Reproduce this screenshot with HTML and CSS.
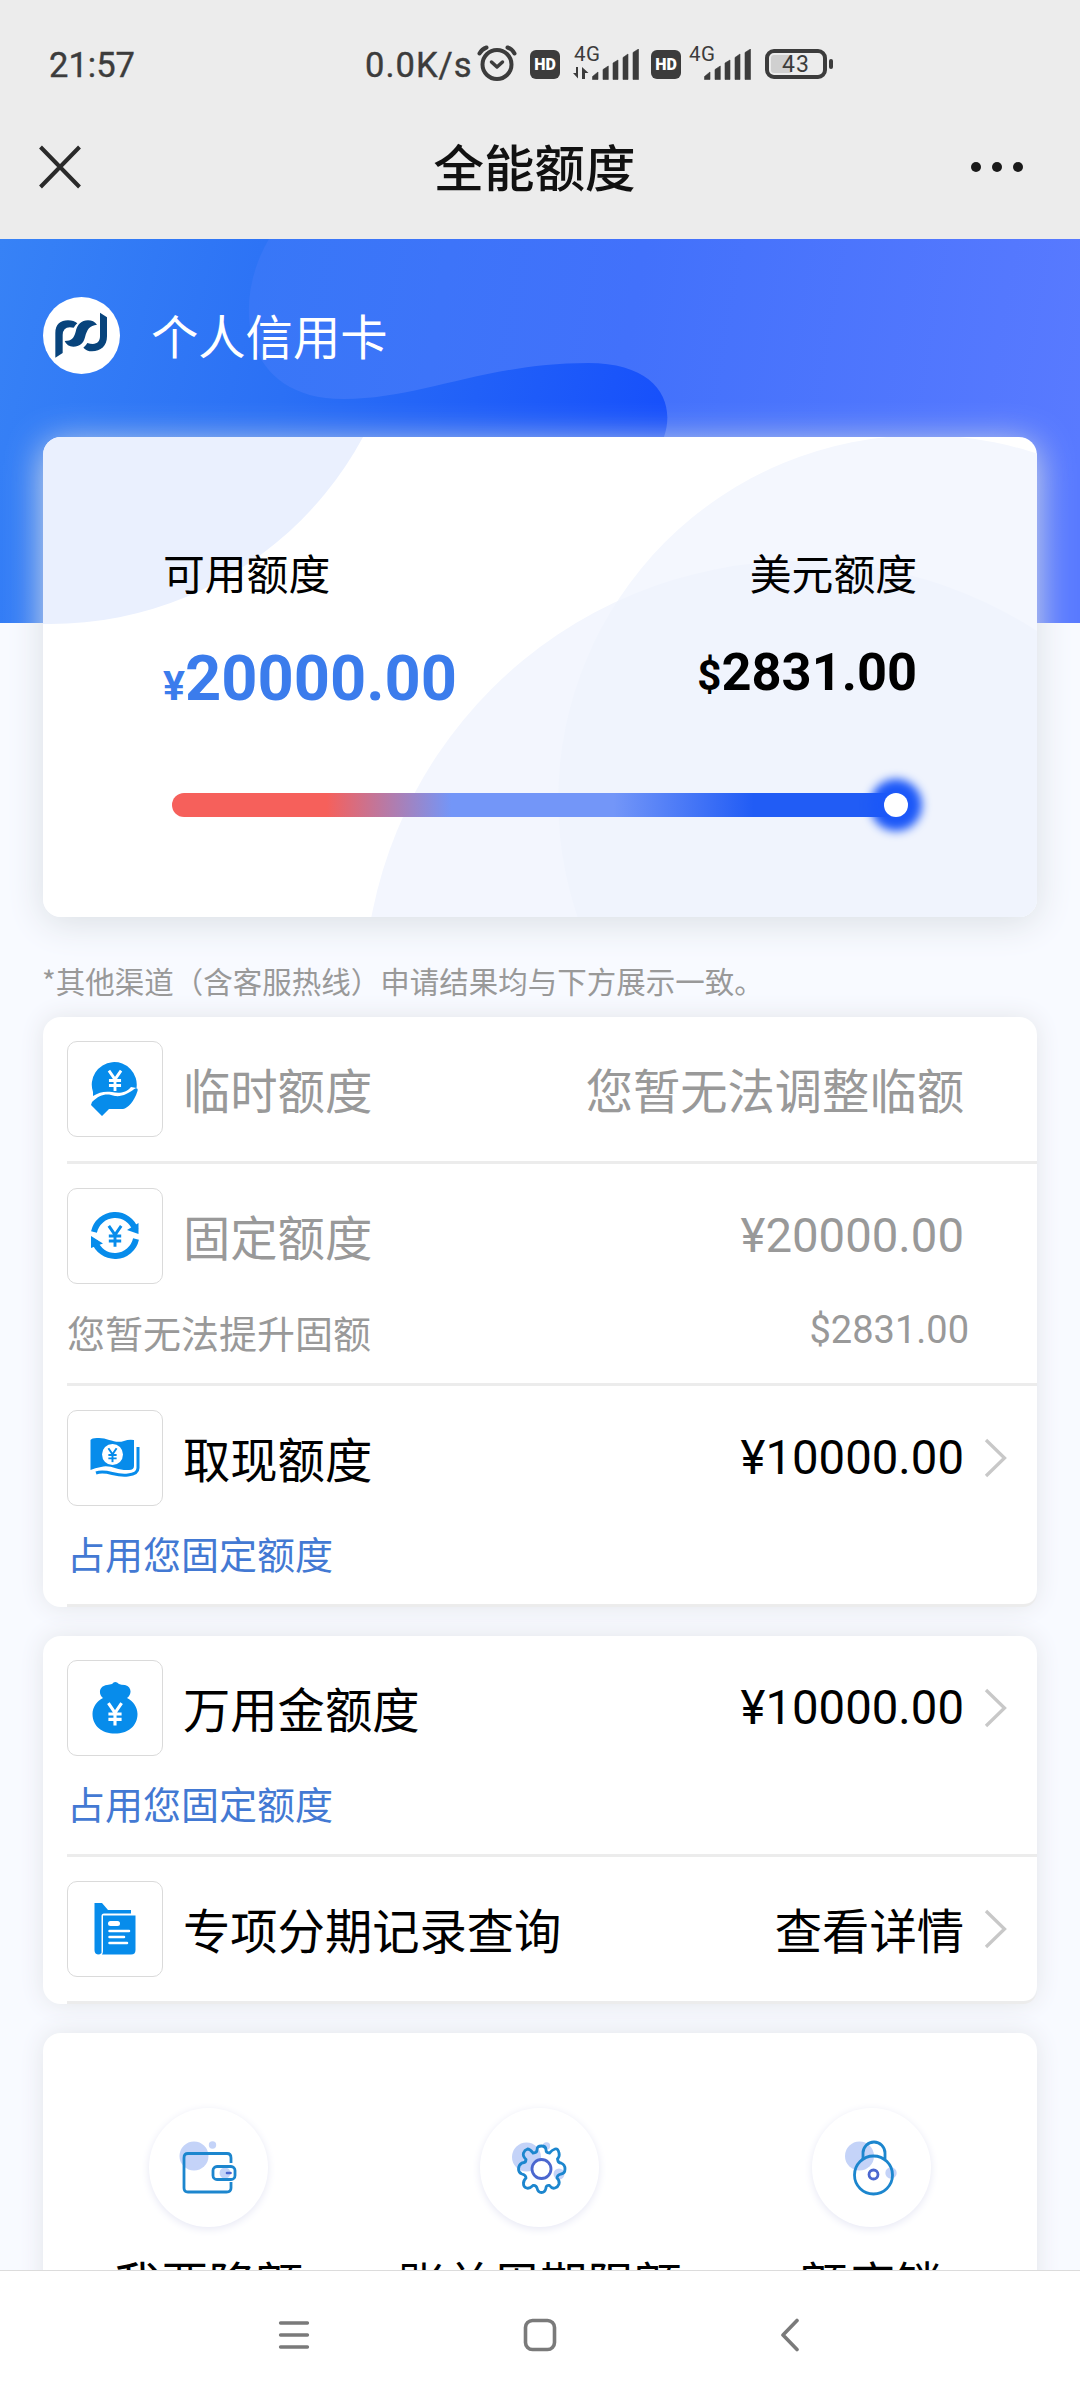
FILE: index.html
```html
<!DOCTYPE html>
<html lang="zh-CN">
<head>
<meta charset="utf-8">
<title>全能额度</title>
<link rel="stylesheet" href="styles.css">
</head>
<body>
<svg class="defs" width="0" height="0">
  <defs>
    <symbol id="chevron" viewBox="0 0 24 40"><path d="M2 2L20.500 20L2 38" fill="none" stroke="#c8c8c8" stroke-width="3.300"/></symbol>
    <symbol id="bars" viewBox="0 0 47 31"><path d="M.5 30.500V27.500L6 23V30.500ZM11 30.500V20.500L16.300 17V30.500ZM21 30.500V14L26 11V30.500ZM31 30.500V8.500L36 5V30.500ZM41 30.500V3.500L46.500 0V30.500Z" fill="#3c3c3c" stroke="#3c3c3c" stroke-width=".6"/></symbol>
    <symbol id="yen" viewBox="0 0 16 20"><path d="M2.500 1L8 9L13.500 1M8 9V19.500M2.500 10H13.500M2.500 14.500H13.500" fill="none" stroke="currentColor" stroke-width="2.600"/></symbol>
  </defs>
</svg>
<div class="screen">
  <header class="top">
    <div class="status">
      <span class="time">21:57</span>
      <span class="speed">0.0K/s</span>
      <svg class="alarm" width="40" height="36" viewBox="0 0 40 36"><g fill="none" stroke="#3c3c3c" stroke-linecap="round"><circle cx="20" cy="19.500" r="14.500" stroke-width="4"/><path d="M14.500 17L20 22L25.500 17" stroke-width="3.500" stroke-linejoin="round"/><path d="M2.500 8.500Q5 4 9.500 2.500M37.500 8.500Q35 4 30.500 2.500" stroke-width="4"/></g></svg>
      <span class="hd hd-first">HD</span>
      <span class="signal signal-first"><span class="gen">4G</span><svg class="arrows" width="16" height="12" viewBox="0 0 16 12"><path d="M5 0V11.500L0 6H3V0ZM9 12V0L15.500 6H12V12Z" fill="#3c3c3c"/></svg><svg class="bars" width="47" height="31"><use href="#bars"/></svg></span>
      <span class="hd hd-second">HD</span>
      <span class="signal signal-second"><span class="gen">4G</span><svg class="bars" width="47" height="31"><use href="#bars"/></svg></span>
      <span class="battery">43</span><span class="nub"></span>
    </div>
    <div class="titlebar">
      <svg class="close" width="42" height="44" viewBox="0 0 42 44"><path d="M1.500 2L40.500 42M40.500 2L1.500 42" stroke="#2a2a2a" stroke-width="4"/></svg>
      <h1 class="title">全能额度</h1>
      <svg class="more" width="54" height="12" viewBox="0 0 54 12"><g fill="#1a1a1a"><circle cx="6" cy="6" r="5"/><circle cx="27" cy="6" r="5"/><circle cx="48" cy="6" r="5"/></g></svg>
    </div>
  </header>

  <main class="content">
    <section class="hero">
      <svg class="hero-bg" width="1080" height="384" viewBox="0 0 1080 384">
        <defs>
          <linearGradient id="deep" gradientUnits="userSpaceOnUse" x1="0" y1="0" x2="670" y2="160"><stop offset="0" stop-color="#3782f6"/><stop offset=".45" stop-color="#2b70f5"/><stop offset="1" stop-color="#1750fb"/></linearGradient>
          <linearGradient id="light" gradientUnits="userSpaceOnUse" x1="245" y1="80" x2="1080" y2="220"><stop offset="0" stop-color="#3877f7"/><stop offset=".45" stop-color="#4271fb"/><stop offset="1" stop-color="#597aff"/></linearGradient>
        </defs>
        <rect width="1080" height="384" fill="url(#deep)"/>
        <path d="M269 0C232 62 240 160 344 160C421 160 485 124 588 124C657 124 676 163 664 198V384H1080V0Z" fill="url(#light)"/>
      </svg>
      <div class="account">
        <svg class="logo" width="77" height="77" viewBox="21 20 231 231"><circle cx="136.500" cy="135.500" r="115.500" fill="#fff"/><path d="M58 202V128C58 102 74 90 96 90Q114 90 124 99Q117 105 113 112Q81 105 80 134V188Z" fill="#08447c"/><path d="M213 81V138C213 167 194 183 168 183Q152 183 142 172Q150 166 154 158C180 166 192 156 192 138V67Z" fill="#08447c"/><path d="M183 103Q173 90 156 90C136 90 124 102 119 124C114 143 107 151 86 152Q93 169 112 169C131 169 142 160 147 141C153 117 161 105 183 103Z" fill="#08447c"/></svg>
        <span class="account-name">个人信用卡</span>
      </div>
      <div class="quota">
        <svg class="quota-bg" width="994" height="480" viewBox="43 437 994 480">
          <rect x="43" y="437" width="994" height="480" fill="#fff"/>
          <circle cx="50" cy="268.500" r="355.500" fill="#eaf0fe"/>
          <circle cx="800" cy="997" r="436" fill="#f3f6fe"/>
          <circle cx="923" cy="800" r="364.700" fill="#f4f7fe"/>
          <clipPath id="overlap"><circle cx="923" cy="800" r="364.700"/></clipPath>
          <circle cx="800" cy="997" r="436" fill="#f0f4fd" clip-path="url(#overlap)"/>
        </svg>
        <div class="figures">
          <div class="figure"><span class="label">可用额度</span><span class="amount cny"><span class="sign">¥</span>20000.00</span></div>
          <div class="figure right"><span class="label">美元额度</span><span class="amount usd"><span class="sign">$</span>2831.00</span></div>
        </div>
        <div class="slider"><span class="knob"></span></div>
      </div>
    </section>

    <p class="note">*其他渠道（含客服热线）申请结果均与下方展示一致。</p>

    <section class="card">
      <div class="item muted">
        <div class="row">
          <span class="icon"><svg width="50" height="58" viewBox="0 0 50 58"><path d="M3 32A22.500 22.500 0 1 1 46.500 28L41 27C36 33 29 33.500 22 32C15 31 9 32 3 36Z" fill="#078ceb"/><path d="M2 42C10 34 17 33 25 36C32 37 39 33 43 30C46 27 48.500 28 47.500 31C44 42 38 48 33 49H19L12 56L1 45Z" fill="#078ceb"/><use href="#yen" x="16" y="9.500" width="18" height="22" color="#fff"/></svg></span>
          <span class="name">临时额度</span><span class="value cjk">您暂无法调整临额</span>
        </div>
      </div>
      <div class="item muted">
        <div class="row">
          <span class="icon"><svg width="50" height="54" viewBox="0 0 50 54"><g fill="none" stroke="#078ceb" stroke-width="6"><path d="M4 23A21.500 21.500 0 0 1 45.500 21"/><path d="M46 30A21.500 21.500 0 0 1 4.500 32"/></g><path d="M48.500 14V25L37 21ZM1 39V27L13 34.500Z" fill="#078ceb"/><use href="#yen" x="16" y="15.500" width="18" height="23" color="#078ceb"/></svg></span>
          <span class="name">固定额度</span><span class="value">¥20000.00</span>
        </div>
        <div class="sub"><span>您暂无法提升固额</span><span class="sub-value">$2831.00</span></div>
      </div>
      <div class="item">
        <div class="row">
          <span class="icon"><svg width="50" height="42" viewBox="0 0 50 42"><path d="M.5 3Q2 .5 9 1C18 1 25 7 34 4Q39 2 44 3V29Q44 33 39 33C28 34 20 27 11 30Q5 31 .5 33Z" fill="#078ceb"/><path d="M6 36C17 32 25 40 38 38Q48 37 48 31V10" fill="none" stroke="#078ceb" stroke-width="3"/><circle cx="22.500" cy="17.500" r="10.500" fill="#fff"/><use href="#yen" x="16.500" y="10.500" width="12" height="15" color="#078ceb"/></svg></span>
          <span class="name">取现额度</span><span class="value">¥10000.00</span><svg class="chevron" width="24" height="40"><use href="#chevron"/></svg>
        </div>
        <div class="sub link"><span>占用您固定额度</span></div>
      </div>
    </section>

    <section class="card">
      <div class="item">
        <div class="row">
          <span class="icon"><svg width="46" height="54" viewBox="0 0 46 54"><path d="M11 17C6 13 7 5 15 4Q18 3.500 20 3Q23-1 27 3Q29 4 33 4C40 6 40 13 35 17C41 20 45.500 26 45.500 33C45.500 45 36 52.500 23 52.500S.5 45 .5 33C.5 26 5 20 11 17Z" fill="#078ceb"/><use href="#yen" x="13" y="21" width="20" height="24" color="#fff"/></svg></span>
          <span class="name">万用金额度</span><span class="value">¥10000.00</span><svg class="chevron" width="24" height="40"><use href="#chevron"/></svg>
        </div>
        <div class="sub link"><span>占用您固定额度</span></div>
      </div>
      <div class="item">
        <div class="row">
          <span class="icon"><svg width="42" height="52" viewBox="0 0 42 52"><path d="M.5 0H8L14 7H37V10.500H10Q7.500 10.500 7.500 13V50Q6 51.500 4 51.500Q.5 51 .5 47Z" fill="#078ceb"/><path d="M9 12.500H41.500V47Q41.500 51.500 37 51.500H8Q9 50 9 48Z" fill="#078ceb"/><path d="M16.500 20.500H23.500" stroke="#fff" stroke-width="5" stroke-linecap="round"/><path d="M15.500 28H35M15.500 34H30M15.500 40H33" stroke="#fff" stroke-width="2.500" stroke-linecap="round"/></svg></span>
          <span class="name">专项分期记录查询</span><span class="value cjk">查看详情</span><svg class="chevron" width="24" height="40"><use href="#chevron"/></svg>
        </div>
      </div>
    </section>

    <section class="card tools">
      <div class="tool">
        <span class="round"><svg width="60" height="56" viewBox="0 0 60 56"><circle cx="15" cy="16" r="14.500" fill="#c4d3f8"/><circle cx="33.500" cy="5" r="3.700" fill="#c4d3f8"/><circle cx="46" cy="33" r="5.500" fill="#c4d3f8"/><g fill="none" stroke="#1c86ce" stroke-width="2.800"><path d="M52 23V18Q52 13.500 48 13.500H9Q5 13.500 5 18V48Q5 52 9 52H47.500Q52 52 52 48V42"/><rect x="34" y="26.500" width="22" height="13" rx="4"/></g><path d="M48 33H51.500" stroke="#4b67cf" stroke-width="2.600" stroke-linecap="round"/></svg></span>
        <span class="tool-name">我要降额</span>
      </div>
      <div class="tool">
        <span class="round"><svg width="58" height="54" viewBox="0 0 58 54"><circle cx="15.500" cy="16" r="14.500" fill="#c4d3f8"/><circle cx="35.500" cy="5" r="3.700" fill="#c4d3f8"/><circle cx="48" cy="33" r="5.500" fill="#c4d3f8"/><path d="M26 9Q26 5 30.500 5T35 9Q35 12 38.500 12Q41 9 44 8T48 12Q49 15 46.500 18Q47 22 50 22Q54 23.500 54 28T50 33Q46 34 46 37Q49 40 48 43T44 47Q41 48 38.500 44.500Q35 44 35 47Q34 51.500 30.500 51.500T26 47Q25 44 22 44.500Q18.500 48 15.500 47T12.500 43Q12 40 15 37Q15 34 11 33Q7.500 32 7.500 28T11 22Q15 22 15 18.500Q11.500 15 12.500 12T16.500 8Q19 8 22 12Q26 12 26 9Z" fill="none" stroke="#1c86ce" stroke-width="2.800"/><circle cx="30.500" cy="28" r="9.500" fill="#fff" stroke="#4b67cf" stroke-width="2.800"/></svg></span>
        <span class="tool-name">账单周期限额</span>
      </div>
      <div class="tool">
        <span class="round"><svg width="56" height="56" viewBox="0 0 56 56"><circle cx="16.500" cy="16" r="14.500" fill="#c4d3f8"/><circle cx="48" cy="33" r="5.700" fill="#c4d3f8"/><g fill="none" stroke="#1c86ce" stroke-width="2.800"><circle cx="30.500" cy="35" r="19"/><path d="M20 19V13A11 11 0 0 1 42 13V19"/></g><circle cx="30.500" cy="34.500" r="4.500" fill="#fff" stroke="#4b67cf" stroke-width="2.800"/></svg></span>
        <span class="tool-name">额度锁</span>
      </div>
    </section>
  </main>

  <nav class="nav">
    <svg width="32" height="34" viewBox="0 0 32 34"><path d="M2.500 5H29.500M2.500 17H29.500M2.500 29H29.500" stroke="#7a7a7a" stroke-width="3.300" stroke-linecap="round"/></svg>
    <svg width="34" height="34" viewBox="0 0 34 34"><rect x="2.500" y="2.500" width="29" height="29" rx="7" fill="none" stroke="#7a7a7a" stroke-width="3.600"/></svg>
    <svg width="20" height="34" viewBox="0 0 20 34"><path d="M17 2.500L3 17L17 31.500" fill="none" stroke="#7a7a7a" stroke-width="3.600" stroke-linecap="round" stroke-linejoin="round"/></svg>
  </nav>
</div>
</body>
</html>
```
FILE: styles.css
```css
* { box-sizing: border-box; }
body { margin: 0; background: #f8faff; color: #000; font-family: "Noto Sans CJK SC", sans-serif; }
.defs { display: block; }
svg { display: block; flex: none; }
.screen { width: 1080px; height: 2400px; display: flex; flex-direction: column; overflow: hidden; }

.top { flex: none; height: 239px; background: #ececec; }
.status { display: flex; align-items: flex-start; height: 127px; padding: 45px 0 0 49px; color: #3c3c3c; font-family: Roboto, sans-serif; }
.time, .speed { font-size: 34.5px; line-height: 40px; white-space: nowrap; flex: none; -webkit-text-stroke: .4px #3c3c3c; }
.time { width: 316px; }
.speed { width: 112px; letter-spacing: 1px; }
.hd { flex: none; width: 30px; height: 29px; margin-top: 5px; border-radius: 6px; background: #3c3c3c; color: #fff; font: 900 16px/29px Roboto, sans-serif; text-align: center; }
.hd-first { margin-left: 13px; }
.hd-second { margin-left: 13px; }
.signal { flex: none; display: grid; height: 36px; }
.signal-first { width: 65px; margin-left: 13px; grid-template: 22px 14px / 19px 46px; }
.signal-second { width: 64px; margin-left: 7px; grid-template: 36px / 16px 48px; }
.gen { grid-area: 1 / 1; padding-left: 1px; font-size: 20.5px; line-height: 18px; letter-spacing: .6px; }
.arrows { grid-area: 2 / 1; }
.bars { grid-area: 1 / 2 / -1 / 3; margin-top: 4px; }
.battery { flex: none; width: 62px; height: 30px; margin: 4px 0 0 13px; border: 4px solid #3c3c3c; border-radius: 9px; background: linear-gradient(90deg, #d0d0d0 40%, transparent 40%) content-box; padding: 2px; font-size: 23px; line-height: 19px; letter-spacing: 1px; text-align: center; }
.nub { width: 4px; height: 10px; margin: 14px 0 0 2px; border-radius: 2px; background: #3c3c3c; }
.titlebar { display: grid; grid-template-columns: 160px 1fr 160px; align-items: center; height: 80px; padding: 0 56px 0 39px; }
.title { margin: -5px 0 0; padding-left: 6px; text-align: center; font-size: 50.5px; font-weight: 500; line-height: 76px; color: #111; }
.more { justify-self: end; }

.content { flex: none; height: 2031px; overflow: hidden; }
.hero { position: relative; height: 678px; padding: 58px 43px 0; }
.hero-bg { position: absolute; left: 0; top: 0; }
.account { position: relative; display: flex; align-items: center; gap: 31px; height: 77px; color: #fff; }
.account-name { font-size: 47.3px; line-height: 74px; margin-top: -1px; }
.quota { position: relative; height: 480px; margin-top: 63px; padding: 105px 120px 0; border-radius: 18px; box-shadow: 0 6px 36px #dadfe4; }
.quota-bg { position: absolute; left: 0; top: 0; border-radius: 18px; }
.figures { position: relative; display: flex; justify-content: space-between; height: 251px; }
.figure { display: flex; flex-direction: column; }
.right { align-items: flex-end; }
.label { font-size: 41.8px; line-height: 60px; }
.amount { font-family: Roboto, sans-serif; font-weight: bold; white-space: nowrap; }
.cny { font-size: 63.2px; line-height: 80px; margin-top: 36px; color: #3b7cec; }
.cny .sign { font-size: 41px; }
.usd { font-size: 52.4px; line-height: 70px; margin-top: 35px; }
.usd .sign { font-size: 42px; }
.slider { position: relative; display: flex; justify-content: flex-end; width: 736px; height: 24px; margin-left: 9px; border-radius: 12px; background: linear-gradient(90deg, #f6605b 21%, #7396f8 38%, #7396f8 60%, #215cf5 79%); }
.knob { width: 24px; height: 24px; border-radius: 50%; background: #fff; box-shadow: 0 0 10px 14px #1c58f8; }

.note { margin: 0; height: 100px; padding: 38px 43px 0; font-size: 29.5px; line-height: 50px; color: #999; text-indent: -1px; }
.card { margin: 0 43px 29px; border-radius: 18px; background: #fff; box-shadow: 0 0 24px #e3e5e9; }
.item { margin-left: 24px; padding-top: 24px; height: 147px; border-bottom: 3px solid #ececec; }
.item:has(.sub) { height: 222px; }
.item:has(.link) { height: 221px; }
.card .item:last-child { border-bottom-right-radius: 14px; }
.row { display: flex; align-items: center; height: 96px; padding-right: 26px; }
.icon { display: flex; align-items: center; justify-content: center; width: 96px; height: 96px; border: 1px solid #dadada; border-radius: 10px; }
.name { flex: 1; margin-left: 20px; font-size: 47.3px; line-height: 96px; white-space: nowrap; }
.value { margin-right: 47px; font: 47.3px/96px Roboto, sans-serif; white-space: nowrap; }
.value.cjk { font-family: "Noto Sans CJK SC", sans-serif; }
.value:has(+ .chevron) { margin-right: 20px; }
.chevron { margin-right: 3px; }
.muted { color: #999; }
.sub { display: flex; justify-content: space-between; padding-right: 68px; font-size: 38px; line-height: 96px; }
.sub-value { font-family: Roboto, sans-serif; line-height: 92px; }
.link { color: #4379d3; line-height: 94px; }

.tools { display: grid; grid-template-columns: repeat(3, 331.3px); height: 400px; padding-top: 75px; }
.tool { display: flex; flex-direction: column; align-items: center; gap: 20px; }
.round { display: flex; align-items: center; justify-content: center; width: 119px; height: 119px; border-radius: 50%; box-shadow: 0 2px 8px #e6e7f4; }
.tool-name { font-size: 47.3px; line-height: 70px; white-space: nowrap; }

.nav { flex: none; display: grid; grid-template-columns: 245px 257px 1fr; height: 130px; padding: 47px 0 0 278px; background: #fff; border-top: 1px solid #dcdcdc; }
```
